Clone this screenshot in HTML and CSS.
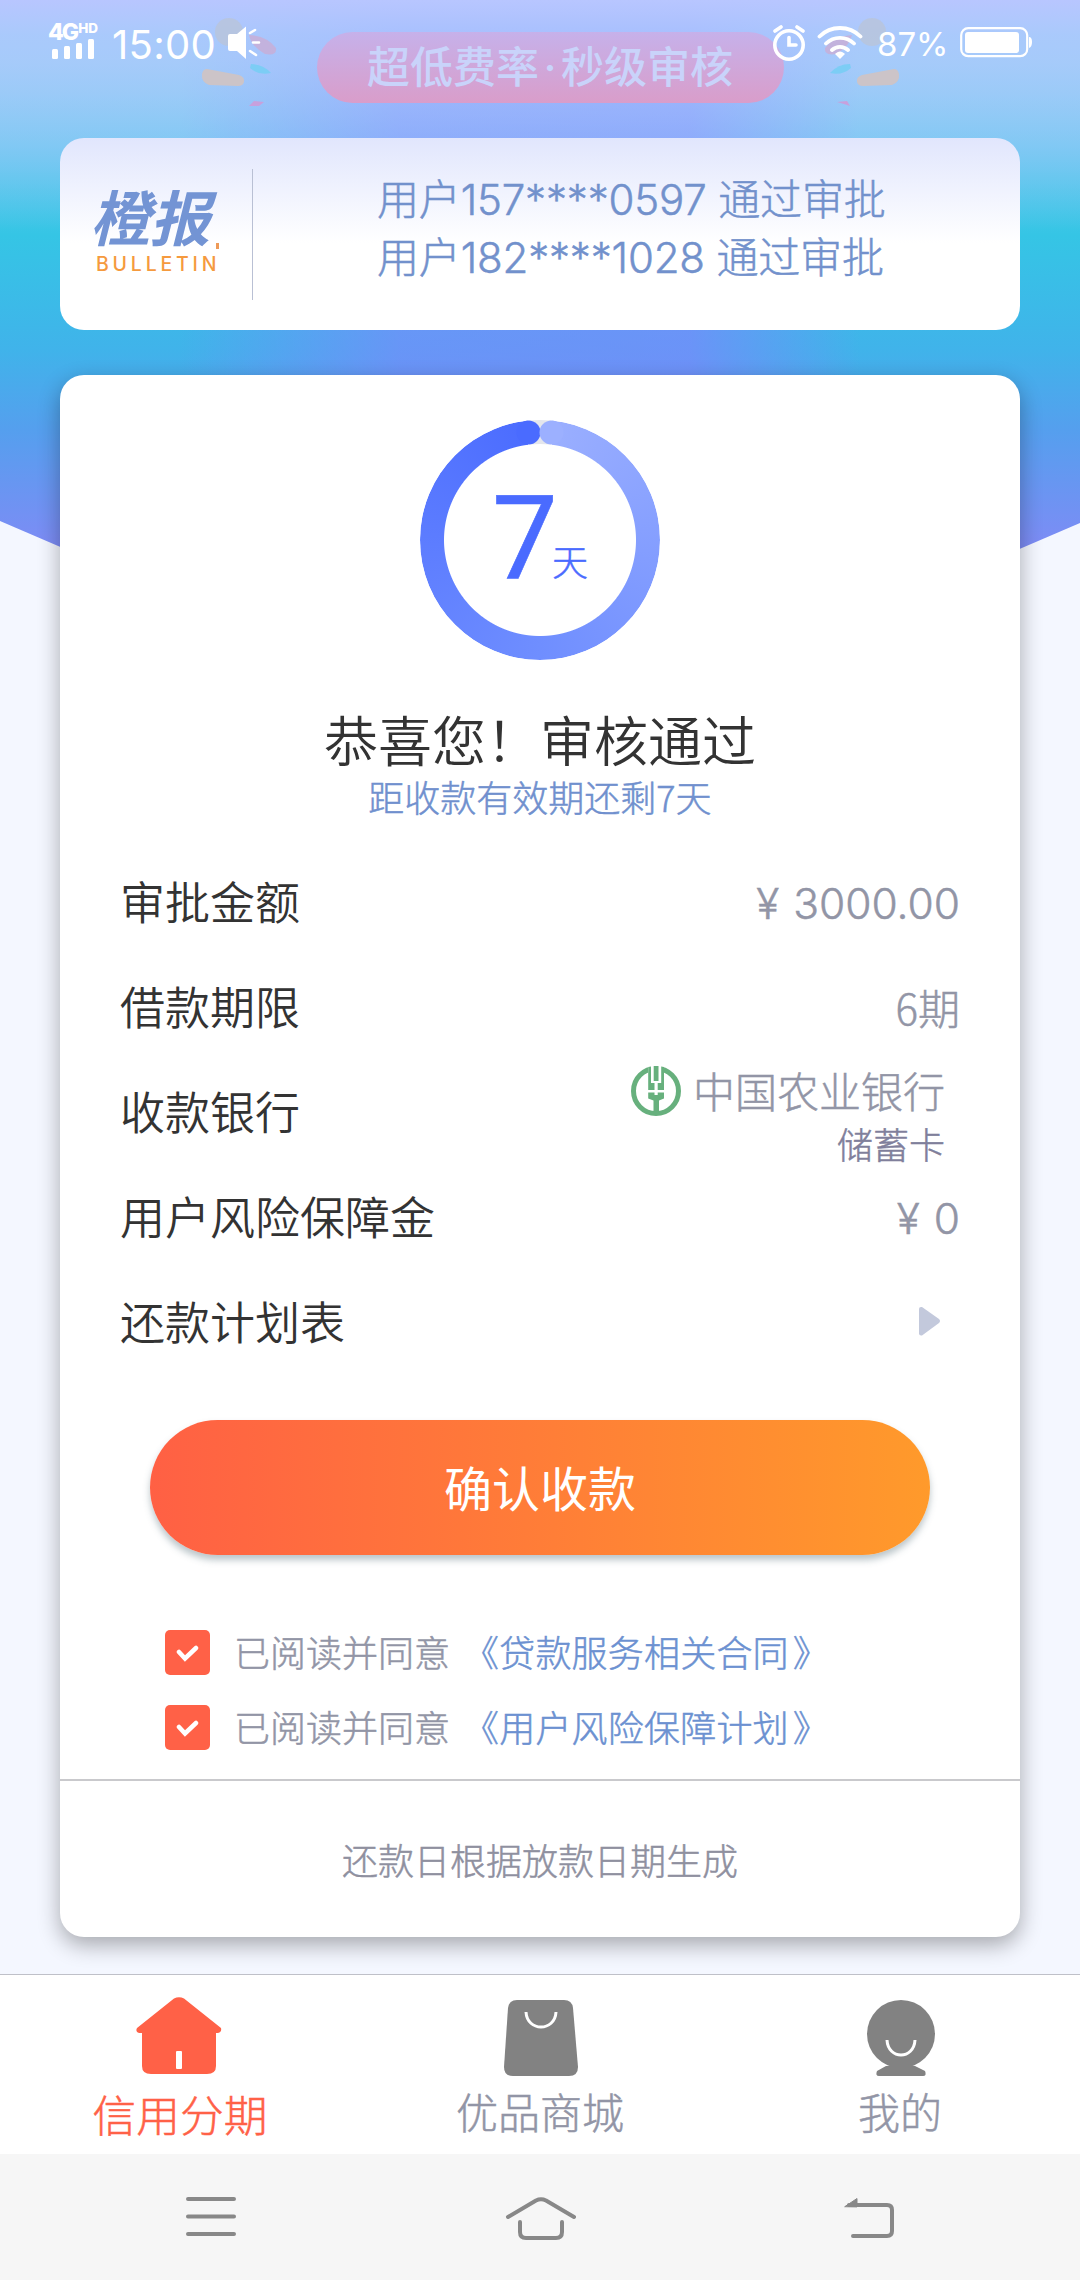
FILE: index.html
```html
<!DOCTYPE html>
<html lang="zh-CN">
<head>
<meta charset="utf-8">
<title>信用分期</title>
<link rel="stylesheet" href="styles.css">
</head>
<body>
<div class="hero-bg"></div>
<div class="promo-layer">
  <svg class="confetti" width="80" height="100" viewBox="0 0 80 100">
    <circle cx="28" cy="32" r="14" fill="#b9c4da" opacity=".8"/>
    <path d="M48 35Q66 36 75 48Q76 56 64 54Q50 46 48 35Z" fill="#cfa9d0" opacity=".7"/>
    <path d="M6 69L38 75Q44 77 43 82Q42 86 37 86L8 85Q0 82 1 74Q2 69 6 69Z" fill="#ccc4c8"/>
    <path d="M50 64Q62 64 70 73Q58 76 49 68Z" fill="#7ccdf5"/>
    <path d="M48 106L53 101L63 102L58 106Z" fill="#c8a0dc"/>
  </svg>
  <div class="promo">超低费率<span>·</span>秒级审核</div>
  <svg class="confetti mirrored" width="80" height="100" viewBox="0 0 80 100">
    <circle cx="28" cy="32" r="14" fill="#b9c4da" opacity=".8"/>
    <path d="M48 35Q66 36 75 48Q76 56 64 54Q50 46 48 35Z" fill="#cfa9d0" opacity=".7"/>
    <path d="M6 69L38 75Q44 77 43 82Q42 86 37 86L8 85Q0 82 1 74Q2 69 6 69Z" fill="#ccc4c8"/>
    <path d="M50 64Q62 64 70 73Q58 76 49 68Z" fill="#7ccdf5"/>
    <path d="M50 106L53 101L63 102L56 104Z" fill="#c8a0dc"/>
  </svg>
</div>

<header class="status">
  <div class="network">
    <div class="net-type">4G<sup>HD</sup></div>
    <svg width="44" height="20" viewBox="0 0 44 20" fill="#fff"><rect x="0" y="10" width="6" height="10" rx="1.5"/><rect x="12" y="7" width="6" height="13" rx="1.5"/><rect x="24" y="4" width="6" height="16" rx="1.5"/><rect x="36" y="0" width="6" height="20" rx="1.5"/></svg>
  </div>
  <span class="clock">15:00</span>
  <svg class="speaker" width="36" height="36" viewBox="0 0 36 36"><path d="M2 9H9L18 1.500V34L9 26H2Q0 26 0 24V11Q0 9 2 9Z" fill="#fff"/><path d="M22 8L27 5M25 17.500H31M22 26L28 30" stroke="#fff" stroke-width="2.600" stroke-linecap="round"/></svg>
  <span class="grow"></span>
  <svg class="alarm" width="34" height="36" viewBox="0 0 34 36" fill="none" stroke="#fff" stroke-width="3.600" stroke-linecap="round"><circle cx="17" cy="20" r="14.200"/><path d="M17 12.500V20H24M3 6L9 2M25 2L31 6"/></svg>
  <svg class="wifi" width="46" height="34" viewBox="0 0 46 34" fill="none" stroke="#fff" stroke-width="3.800" stroke-linecap="round"><path d="M2.500 10.500A29 29 0 0 1 43.500 10.500M9 17.500A20 20 0 0 1 37 17.500M15 24A12 12 0 0 1 31 24"/><path d="M19.500 28Q23 25 26.500 28L23 31.500Z" fill="#fff" stroke-width="2"/></svg>
  <span class="percent">87%</span>
  <svg width="73" height="31" viewBox="0 0 73 31"><rect x="1.200" y="1.200" width="66" height="28" rx="7" fill="none" stroke="#fff" stroke-width="2.200"/><rect x="5" y="5" width="54" height="21" rx="3" fill="#fff"/><path d="M69 10Q72 10 72 15T69 21Z" fill="#fff"/></svg>
</header>

<section class="bulletin">
  <div class="brand">
    <div class="brand-name">橙报<i></i></div>
    <div class="brand-en">BULLETIN</div>
  </div>
  <div class="news">
    <div>用户157****0597 通过审批</div>
    <div>用户182****1028 通过审批</div>
  </div>
</section>

<main class="card">
  <div class="ring">
    <div class="ring-arc"></div>
    <svg class="ring-gap" width="240" height="240" viewBox="0 0 240 240"><path d="M108 0H132V25H108Z" fill="#fff"/><path d="M109 .5Q120-.5 131 .5V24.500Q120 23.500 109 24.500Z" fill="#e4e6ec"/><circle cx="108.500" cy="12.600" r="12" fill="#4a6bff"/><circle cx="131.500" cy="12.600" r="12" fill="#9cb0ff"/></svg>
    <span class="days">7</span><span class="unit">天</span>
  </div>
  <h1>恭喜您！审核通过</h1>
  <p class="sub">距收款有效期还剩7天</p>
  <dl class="rows">
    <div><dt>审批金额</dt><dd class="num"><b>¥</b>3000.00</dd></div>
    <div><dt>借款期限</dt><dd>6期</dd></div>
    <div><dt>收款银行</dt>
      <dd class="bank">
        <span class="bank-name"><svg width="50" height="50" viewBox="0 0 50 50"><circle cx="25" cy="25" r="22.500" fill="none" stroke="#67b07d" stroke-width="5"/><path d="M17 0H33V8H17Z" fill="#fff"/><path d="M17.200 1L20 .5V17H23.500V24H17.200ZM33 1L30.200 .5V17H26.700V24H33ZM22.700 0H27.500V15H22.700ZM17.200 26.500H23.500V29H26.700V26.500H33V32.500L28 34.500V48H22.500V34.500L17.200 32.500Z" fill="#67b07d"/></svg>中国农业银行</span>
        <span class="bank-type">储蓄卡</span>
      </dd></div>
    <div><dt>用户风险保障金</dt><dd class="num"><b>¥</b>0</dd></div>
    <div><dt>还款计划表</dt><dd><svg class="arrow" width="23" height="30" viewBox="0 0 23 30"><path d="M1 3Q1 .5 4 1L21 13Q23 15 21 17L4 29.500Q1 30 1 27.500Z" fill="#c3c9dc"/></svg></dd></div>
  </dl>
  <button class="confirm">确认收款</button>
  <div class="agreements">
    <label><span class="box"><svg width="24" height="20" viewBox="0 0 24 20"><path d="M3 9L9 15.500L20 5" fill="none" stroke="#fff" stroke-width="4.500" stroke-linecap="round"/></svg></span><span class="terms">已阅读并同意<a>《贷款服务相关合同<i>》</i></a></span></label>
    <label><span class="box"><svg width="24" height="20" viewBox="0 0 24 20"><path d="M3 9L9 15.500L20 5" fill="none" stroke="#fff" stroke-width="4.500" stroke-linecap="round"/></svg></span><span class="terms">已阅读并同意<a>《用户风险保障计划<i>》</i></a></span></label>
  </div>
  <footer class="note">还款日根据放款日期生成</footer>
</main>

<nav class="tabs">
  <div class="tab active">
    <svg width="86" height="80" viewBox="0 0 86 80"><path d="M38 1.500Q43-1 48 1.500L85 31Q86 35 82 36H80V69Q80 77 71 77H15Q6 77 6 69V36H3Q-1 35 1 31Z" fill="#ff6147"/><rect x="40" y="54" width="6" height="18" rx="1" fill="#fff"/></svg>
    <span>信用分期</span>
  </div>
  <div class="tab">
    <svg width="76" height="80" viewBox="0 0 76 80"><path d="M14 3H61Q69 3 70 11L75 70Q75 79 66 79H10Q1 79 1 70L5 11Q6 3 14 3Z" fill="#828282"/><path d="M23 15C24 35 52 35 53 15" fill="none" stroke="#fff" stroke-width="3"/></svg>
    <span>优品商城</span>
  </div>
  <div class="tab">
    <svg width="70" height="80" viewBox="0 0 70 80"><circle cx="35" cy="37" r="34" fill="#828282"/><path d="M20 69L11 74Q9 79 13 79H57Q61 79 59 74L49 69Z" fill="#828282"/><path d="M21 43C22 63 48 63 49 43" fill="none" stroke="#fff" stroke-width="3"/></svg>
    <span>我的</span>
  </div>
</nav>
<div class="sysnav">
  <svg width="50" height="40" viewBox="0 0 50 40"><path d="M2 2H48M2 19.500H48M2 37H48"/></svg>
  <svg width="72" height="44" viewBox="0 0 72 44"><path d="M4 20L32 3.500Q37 1 42 3.500L70 20M16 25V35Q16 41 22 41H52Q58 41 58 35V25"/></svg>
  <svg width="52" height="44" viewBox="0 0 52 44"><path d="M6 8H44Q49 8 49 13V34Q49 39 44 39H10"/><path class="tip" d="M2 9.500L14 1.500V9.500Z"/></svg>
</div>
</body>
</html>
```
FILE: styles.css
```css
* { box-sizing: border-box; margin: 0; padding: 0; }
body {
  position: relative;
  display: flex;
  flex-direction: column;
  width: 1080px;
  height: 2280px;
  overflow: hidden;
  background: #f4f7ff;
  font-family: "Noto Sans CJK SC", sans-serif;
  font-weight: 300;
}
svg { display: block; flex: none; }
.hero-bg {
  position: absolute;
  inset: 0 0 auto;
  height: 740px;
  background:
    linear-gradient(180deg, #b8c6ff 0, rgba(176, 200, 255, .8) 35px, rgba(170, 200, 255, 0) 230px),
    linear-gradient(90deg, rgba(130, 130, 255, 0) 180px, rgba(130, 130, 255, .6) 400px, rgba(130, 130, 255, .65) 690px, rgba(130, 130, 255, 0) 860px),
    linear-gradient(180deg, #8fd0ef 60px, #66c8ee 150px, #35c5e5 235px, #40b3ea 350px, #559fee 430px, #7d8cf5 545px);
  clip-path: polygon(0 0, 100% 0, 100% 523px, 94.400% 549px, 50% 640px, 5.600% 547px, 0 521px);
}
.promo-layer {
  position: absolute;
  inset: 0 0 auto;
  display: flex;
  justify-content: center;
  gap: 36px;
  height: 138px;
  padding-left: 20px;
}
.promo {
  width: 467px;
  height: 71px;
  margin-top: 32px;
  border-radius: 36px;
  background: linear-gradient(180deg, #c6b1ea, #d99dca);
  color: #c9d3fa;
  font-size: 43px;
  font-weight: 500;
  line-height: 64px;
  text-align: center;
  white-space: nowrap;
}
.promo span { display: inline-block; width: 22px; font-family: Inter, sans-serif; }
.confetti { overflow: visible; }
.mirrored { transform: scaleX(-1); }

.status {
  position: relative;
  display: flex;
  align-items: flex-start;
  height: 138px;
  padding: 23px 47px 0 48px;
  color: #fff;
}
.network { width: 52px; }
.net-type {
  display: flex;
  height: 16px;
  font: 800 23px/19px Inter, sans-serif;
  letter-spacing: -2px;
}
.net-type sup { margin-left: 1px; font-size: 13.500px; line-height: 10px; letter-spacing: 0; }
.network svg { margin-left: 4px; }
.clock { width: 114px; margin: 0 0 0 12px; font: 400 40px/43px Inter, sans-serif; letter-spacing: .3px; }
.speaker { margin: 2px 0 0 2px; }
.grow { flex: 1; }
.alarm { margin: 2px 11px 0 0; }
.wifi { margin: 3px 14px 0 0; }
.percent { width: 83px; font: 400 33px/42px Inter, sans-serif; }
.status > svg:last-child { margin-top: 4px; }

.bulletin {
  position: relative;
  display: flex;
  align-items: center;
  height: 192px;
  margin: 0 60px;
  border-radius: 24px;
  background: linear-gradient(180deg, #e1e6fd 0, #fff 105px);
}
.brand {
  width: 193px;
  height: 131px;
  border-right: 1px solid #b9c0d4;
  padding-left: 30px;
}
.brand-name {
  position: relative;
  width: 132px;
  height: 83px;
  color: #7394d4;
  font-size: 60px;
  font-weight: 700;
  font-style: italic;
  line-height: 92px;
  white-space: nowrap;
}
.brand-name i { position: absolute; right: 3px; bottom: 3px; width: 3px; height: 6px; background: #ee9a58; }
.brand-en { margin-left: 6px; color: #f59a3e; font: 500 19.500px/24px Inter, sans-serif; letter-spacing: 3.800px; }
.news { flex: 1; padding: 0 0 10px 124px; color: #7291cc; font-family: Inter, "Noto Sans CJK SC", sans-serif; font-size: 42px; line-height: 58px; letter-spacing: -.17px; white-space: nowrap; }
.news, .sub, .rows dd, .agreements, .note, .tab { -webkit-text-stroke: .5px currentColor; }

.card {
  position: relative;
  display: flex;
  flex-direction: column;
  height: 1562px;
  margin: 45px 60px 0;
  padding-top: 45px;
  border-radius: 24px;
  background: #fff;
  box-shadow: 0 8px 22px rgba(0, 0, 0, .32);
}
.ring {
  position: relative;
  align-self: center;
  display: flex;
  align-items: baseline;
  justify-content: center;
  width: 240px;
  height: 240px;
  color: #4a6bff;
}
.ring-arc, .ring-gap { position: absolute; inset: 0; }
.ring-arc {
  border-radius: 50%;
  background: conic-gradient(#9cb0ff, #6f8eff 50%, #4a6bff);
  mask: radial-gradient(circle, transparent 95.500px, #000 96.500px);
}
.days { font: 400 117px/239px Roboto, sans-serif; -webkit-text-stroke: .6px currentColor; }
.unit { margin-left: -6px; font-size: 36px; line-height: 40px; transform: translateY(-3px); -webkit-text-stroke: .5px currentColor; }
h1 { margin-top: 51px; color: #333; font-size: 54px; font-weight: 350; line-height: 56px; text-align: center; }
.sub { margin-top: 8px; color: #7090ce; font-size: 36px; line-height: 42px; text-align: center; }
.rows { margin-top: 33px; padding: 0 60px; font-size: 45px; }
.rows > div { display: flex; align-items: center; justify-content: space-between; height: 105px; }
.rows dt { padding-bottom: 4px; color: #333; font-weight: 350; line-height: 96px; }
.rows dd { padding-bottom: 3px; color: #9295a6; font-size: 42px; line-height: 97px; }
.rows .num { padding: 2px 0 0; font-family: Inter, sans-serif; font-size: 42.500px; }
.num b { display: inline-block; width: 37px; font-weight: 300; }
.rows .bank { display: flex; flex-direction: column; align-items: flex-end; padding: 7px 15px 0 0; line-height: 50px; }
.bank-name { display: flex; align-items: center; gap: 12px; height: 51px; line-height: 50px; }
.bank-name svg { margin-top: 1px; }
.rows .bank-type { margin-top: 2px; color: #807f9b; font-size: 36px; line-height: 50px; }
.arrow { margin-right: 19px; }
.confirm {
  align-self: center;
  width: 780px;
  height: 135px;
  margin-top: 45px;
  border: 0;
  border-radius: 68px;
  padding-bottom: 3px;
  background: linear-gradient(90deg, #ff6044, #ff9a2b);
  box-shadow: 0 5px 7px rgba(60, 90, 100, .35);
  color: #fff;
  font: 400 48px/130px "Noto Sans CJK SC", sans-serif;
}
.agreements { margin-top: 60px; padding-left: 105px; }
.agreements label { display: flex; align-items: center; height: 75px; color: #9295a6; font-size: 36px; line-height: 60px; }
.terms { padding-bottom: 3px; }
.box { display: grid; place-items: center; width: 45px; height: 45px; margin-right: 24px; border-radius: 5px; background: #ff6147; }
.agreements a { margin-left: 13px; color: #6c91d1; letter-spacing: .2px; }
.agreements i { margin-left: 4px; font-style: normal; }
.note {
  flex: 1;
  margin-top: 14px;
  border-top: 2px solid #c9c9cc;
  color: #8f909f;
  font-size: 36px;
  line-height: 156px;
  text-align: center;
}
.tabs {
  position: relative;
  display: grid;
  grid-template-columns: repeat(3, 1fr);
  height: 180px;
  margin-top: 37px;
  border-top: 1px solid #bfc0c8;
  background: #fff;
}
.tab { display: flex; flex-direction: column; align-items: center; padding-top: 22px; color: #9295a6; font-size: 42px; line-height: 60px; }
.tab svg { margin-left: 2px; }
.tab span { margin-top: 4px; }
.active { color: #ff6147; font-size: 43.700px; }
.active svg { margin: 0 3px 0 0; }
.active span { margin-top: 6px; }
.sysnav { position: relative; flex: 1; display: flex; align-items: flex-start; justify-content: space-between; padding: 43px 185px 0 186px; background: #f6f6f6; }
.sysnav path { fill: none; stroke: #888; stroke-width: 4; stroke-linecap: round; stroke-linejoin: round; }
.sysnav .tip { fill: #888; stroke-width: 1; }
```
